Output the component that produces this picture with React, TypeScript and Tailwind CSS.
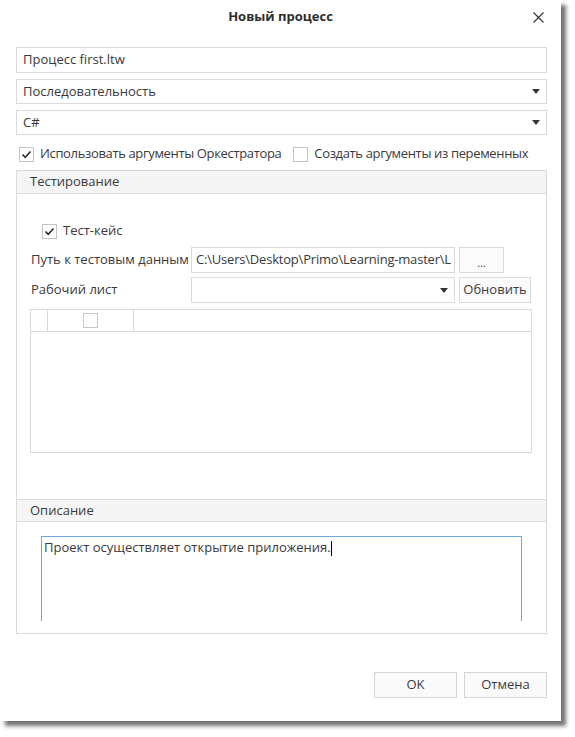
import React from "react";

const font = { fontFamily: '"Open Sans", "Noto Sans", sans-serif' };

function Check({ checked }: { checked?: boolean }) {
  return (
    <span className="w-[15px] h-[15px] border border-[#c4c4c4] bg-white flex items-center justify-center shrink-0">
      {checked && (
        <svg width="11" height="11" viewBox="0 0 11 11">
          <polyline points="1.5,5.5 4.2,8.3 9.5,2.5" fill="none" stroke="#2b2b2b" strokeWidth="1.6" />
        </svg>
      )}
    </span>
  );
}

function Arrow() {
  return (
    <svg width="8" height="5" viewBox="0 0 8 5" className="shrink-0">
      <polygon points="0,0 8,0 4,5" fill="#333" />
    </svg>
  );
}

export default function App() {
  return (
    <div className="w-[575px] h-[737px] bg-white text-[13px] text-[#3a3a3a]" style={font}>
      <div className="w-[561px] h-[721px] bg-white shadow-[5px_5px_4px_rgba(0,0,0,0.55)] flex flex-col">
        {/* Title bar */}
        <div className="h-[34px] grid grid-cols-[1fr_auto_1fr] items-center">
          <div />
          <div className="font-bold text-[13px] text-[#2e2e2e]">Новый процесс</div>
          <div className="flex justify-end pr-[17px]">
            <svg width="11" height="11" viewBox="0 0 11 11">
              <line x1="0.5" y1="0.5" x2="10.5" y2="10.5" stroke="#3a3a3a" strokeWidth="1.3" />
              <line x1="10.5" y1="0.5" x2="0.5" y2="10.5" stroke="#3a3a3a" strokeWidth="1.3" />
            </svg>
          </div>
        </div>

        <div className="pl-[16px] pr-[14px] flex flex-col">
          <div className="mt-[13px] h-[26px] border border-[#dadada] flex items-center px-[6px]">
            Процесс first.ltw
          </div>
          <div className="mt-[6px] h-[25px] border border-[#dadada] flex items-center justify-between pl-[6px] pr-[6px]">
            <span>Последовательность</span>
            <Arrow />
          </div>
          <div className="mt-[6px] h-[25px] border border-[#dadada] flex items-center justify-between pl-[6px] pr-[6px]">
            <span>C#</span>
            <Arrow />
          </div>

          <div className="mt-[7px] h-[24px] flex items-center pl-[3px] whitespace-nowrap tracking-[-0.35px]">
            <Check checked />
            <span className="ml-[6px]">Использовать аргументы Оркестратора</span>
            <span className="ml-[12px]">
              <Check />
            </span>
            <span className="ml-[6px]">Создать аргументы из переменных</span>
          </div>

          {/* Panels */}
          <div className="mt-[4px] h-[464px] border border-[#dadada] flex flex-col">
            <div className="h-[23px] bg-[#f5f5f5] border-b border-[#dadada] flex items-center pl-[13px]">
              Тестирование
            </div>
            <div className="flex-1 flex flex-col pl-[13px] pr-[14px]">
              <div className="mt-[24px] h-[26px] flex items-center pl-[12px]">
                <Check checked />
                <span className="ml-[6px]">Тест-кейс</span>
              </div>
              <div className="mt-[3px] h-[26px] flex items-center">
                <span className="w-[161px] shrink-0 pl-[1px] whitespace-nowrap">Путь к тестовым данным</span>
                <div className="w-[264px] h-[26px] border border-[#dadada] flex items-center pl-[4px] overflow-hidden whitespace-nowrap tracking-[-0.2px]">
                  C:\Users\Desktop\Primo\Learning-master\L
                </div>
                <div className="ml-[4px] w-[45px] h-[26px] border border-[#dadada] bg-[#fbfbfb] flex items-end justify-center pb-[4px] text-[11px] leading-none">
                  …
                </div>
              </div>
              <div className="mt-[4px] h-[26px] flex items-center">
                <span className="w-[161px] shrink-0 pl-[1px]">Рабочий лист</span>
                <div className="w-[264px] h-[26px] border border-[#dadada] flex items-center justify-end pr-[6px]">
                  <Arrow />
                </div>
                <div className="ml-[4px] w-[72px] h-[26px] border border-[#dadada] bg-[#fbfbfb] flex items-center justify-center">
                  Обновить
                </div>
              </div>
              <div className="mt-[6px] h-[144px] border border-[#dadada] flex flex-col">
                <div className="h-[22px] border-b border-[#dadada] flex">
                  <div className="w-[17px] border-r border-[#dadada]" />
                  <div className="w-[86px] border-r border-[#dadada] flex items-center justify-center">
                    <span className="w-[15px] h-[15px] border border-[#c8c8c8]" />
                  </div>
                  <div className="flex-1" />
                </div>
              </div>
            </div>

            <div className="h-[23px] bg-[#f5f5f5] border-t border-b border-[#dadada] flex items-center pl-[13px]">
              Описание
            </div>
            <div className="h-[111px] pt-[14px] pl-[24px] pr-[24px] pb-[12px]">
              <div className="h-full border-t border-l border-r border-[#6fa8e0] pl-[2px] pt-[1px]">
                <span>Проект осуществляет открытие приложения.</span>
                <span className="inline-block w-[1px] h-[15px] bg-black align-middle" />
              </div>
            </div>
          </div>

          <div className="mt-[38px] flex justify-end gap-[7px]">
            <div className="w-[83px] h-[26px] border border-[#d4d4d4] bg-[#fafafa] flex items-center justify-center">
              OK
            </div>
            <div className="w-[83px] h-[26px] border border-[#d4d4d4] bg-[#fafafa] flex items-center justify-center">
              Отмена
            </div>
          </div>
        </div>
      </div>
    </div>
  );
}
